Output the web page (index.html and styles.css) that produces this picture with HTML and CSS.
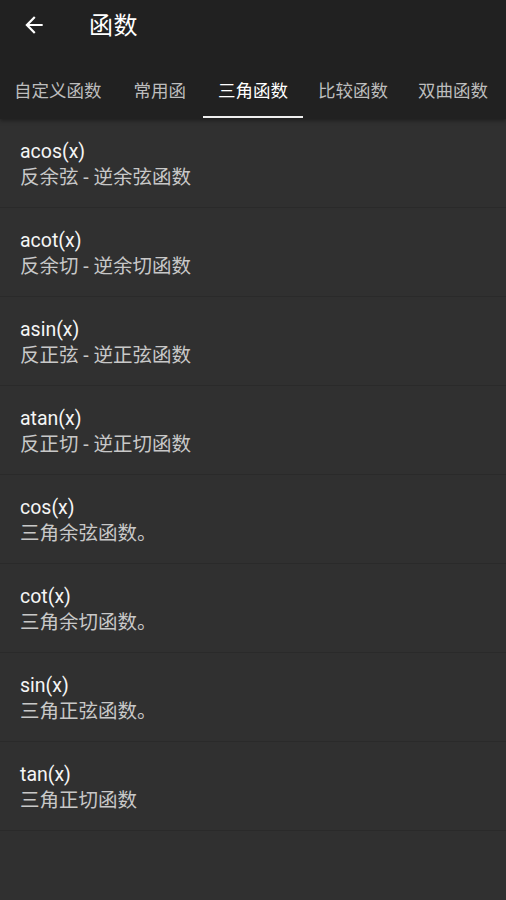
FILE: index.html
```html
<!DOCTYPE html>
<html lang="zh-CN">
<head>
<meta charset="utf-8">
<title>函数</title>
<link rel="stylesheet" href="styles.css">
</head>
<body>
<header class="appbar">
  <div class="toolbar">
    <svg class="back" viewBox="0 0 24 24" width="26" height="26" aria-hidden="true">
      <path d="M20 11H7.83l5.59-5.59L12 4l-8 8 8 8 1.41-1.41L7.83 13H20v-2z" fill="#ffffff"/>
    </svg>
    <h1 class="title">函数</h1>
  </div>
  <nav class="tabs">
    <div class="tab">自定义函数</div>
    <div class="tab tab-narrow">常用函</div>
    <div class="tab active">三角函数</div>
    <div class="tab">比较函数</div>
    <div class="tab">双曲函数</div>
  </nav>
</header>
<main class="list">
  <div class="item"><div class="name">acos(x)</div><div class="desc">反余弦 - 逆余弦函数</div></div>
  <div class="item"><div class="name">acot(x)</div><div class="desc">反余切 - 逆余切函数</div></div>
  <div class="item"><div class="name">asin(x)</div><div class="desc">反正弦 - 逆正弦函数</div></div>
  <div class="item"><div class="name">atan(x)</div><div class="desc">反正切 - 逆正切函数</div></div>
  <div class="item"><div class="name">cos(x)</div><div class="desc">三角余弦函数。</div></div>
  <div class="item"><div class="name">cot(x)</div><div class="desc">三角余切函数。</div></div>
  <div class="item"><div class="name">sin(x)</div><div class="desc">三角正弦函数。</div></div>
  <div class="item"><div class="name">tan(x)</div><div class="desc">三角正切函数</div></div>
</main>
</body>
</html>
```
FILE: styles.css
```css
html, body {
  margin: 0;
  padding: 0;
  background: #303030;
  font-family: Roboto, "Noto Sans CJK SC", sans-serif;
  color: #f2f2f2;
  width: 506px;
  height: 900px;
  overflow: hidden;
}

.appbar {
  position: relative;
  z-index: 1;
  background: #212121;
  height: 119px;
  box-shadow: 0 2px 4px rgba(0, 0, 0, 0.35);
  display: flex;
  flex-direction: column;
}

.toolbar {
  height: 50px;
  display: flex;
  align-items: center;
  padding-left: 21px;
}

.back {
  display: block;
  margin-top: -1px;
}

.title {
  margin: -3px 0 0 42px;
  font-size: 24px;
  font-weight: 400;
  color: #ffffff;
  letter-spacing: 0.5px;
}

.tabs {
  height: 69px;
  display: flex;
  margin-left: -1px;
  overflow: hidden;
  white-space: nowrap;
}

.tab {
  position: relative;
  flex: none;
  padding: 10px 15px 0;
  display: flex;
  align-items: center;
  font-size: 17.5px;
  color: #bdbdbd;
}

.tab-narrow {
  padding: 10px 17px 0;
}

.tab.active {
  color: #ffffff;
}

.tab.active::after {
  content: "";
  position: absolute;
  left: 0;
  right: 0;
  bottom: 1px;
  height: 2px;
  background: #eeeeee;
}

.list {
  display: flex;
  flex-direction: column;
}

.item {
  height: 68px;
  padding: 20px 20px 0;
  border-bottom: 1px solid #2a2a2a;
}

.name {
  font-size: 19.5px;
  line-height: 26px;
  color: #f5f5f5;
}

.desc {
  font-size: 19.5px;
  line-height: 26px;
  color: #c8c8c8;
}
```
